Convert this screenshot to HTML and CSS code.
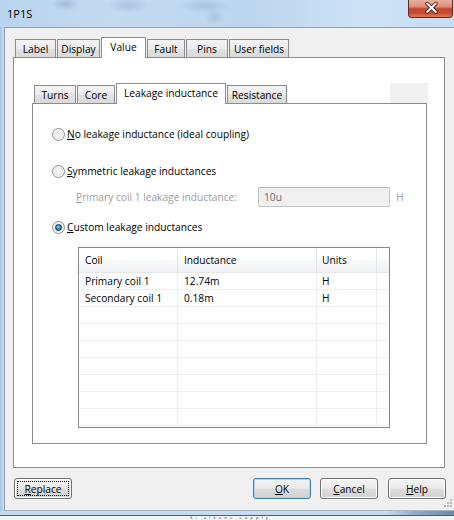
FILE: index.html
```html
<!DOCTYPE html>
<html>
<head>
<meta charset="utf-8">
<link rel="stylesheet" href="styles.css">
</head>
<body>
<div class="screen">
  <div class="titlebar">
    <span class="title">1P1S</span>
    <div class="close">
      <svg width="45" height="18" viewBox="0 0 45 18">
        <path d="M19.5 4.5L28.5 13M28.5 4.5L19.5 13" stroke="#3b1a14" stroke-width="3.8" stroke-linecap="round"/>
        <path d="M19.5 4.5L28.5 13M28.5 4.5L19.5 13" stroke="#ffffff" stroke-width="2.1" stroke-linecap="round"/>
      </svg>
    </div>
  </div>
  <div class="frame-row">
    <div class="frame-left"></div>
    <div class="client">
      <div class="tabs outer-tabs">
        <div class="tab w-label">Label</div>
        <div class="tab w-display">Display</div>
        <div class="tab tab-active w-value">Value</div>
        <div class="tab w-fault">Fault</div>
        <div class="tab w-pins">Pins</div>
        <div class="tab w-user">User fields</div>
      </div>
      <div class="panel outer-panel">
        <div class="tabs inner-tabs">
          <div class="tab w-turns">Turns</div>
          <div class="tab w-core">Core</div>
          <div class="tab tab-active w-leak">Leakage inductance</div>
          <div class="tab w-res">Resistance</div>
          <div class="tab-filler"></div>
        </div>
        <div class="panel inner-panel">
          <div class="opt opt-first">
            <span class="radio"></span>
            <span class="opt-label"><u>N</u>o leakage inductance (ideal coupling)</span>
          </div>
          <div class="opt opt-second">
            <span class="radio"></span>
            <span class="opt-label"><u>S</u>ymmetric leakage inductances</span>
          </div>
          <div class="field-row">
            <span class="field-label"><u>P</u>rimary coil 1 leakage inductance:</span>
            <span class="textbox">10u</span>
            <span class="unit">H</span>
          </div>
          <div class="opt opt-third">
            <span class="radio radio-on"></span>
            <span class="opt-label"><u>C</u>ustom leakage inductances</span>
          </div>
          <div class="grid">
            <div class="grid-head">
              <div class="hc c1">Coil</div>
              <div class="hc c2">Inductance</div>
              <div class="hc c3">Units</div>
              <div class="hc c4"></div>
            </div>
            <div class="grid-row"><div class="gc c1">Primary coil 1</div><div class="gc c2">12.74m</div><div class="gc c3">H</div><div class="gc c4"></div></div>
            <div class="grid-row"><div class="gc c1">Secondary coil 1</div><div class="gc c2">0.18m</div><div class="gc c3">H</div><div class="gc c4"></div></div>
            <div class="grid-row"><div class="gc c1"></div><div class="gc c2"></div><div class="gc c3"></div><div class="gc c4"></div></div>
            <div class="grid-row"><div class="gc c1"></div><div class="gc c2"></div><div class="gc c3"></div><div class="gc c4"></div></div>
            <div class="grid-row"><div class="gc c1"></div><div class="gc c2"></div><div class="gc c3"></div><div class="gc c4"></div></div>
            <div class="grid-row"><div class="gc c1"></div><div class="gc c2"></div><div class="gc c3"></div><div class="gc c4"></div></div>
            <div class="grid-row"><div class="gc c1"></div><div class="gc c2"></div><div class="gc c3"></div><div class="gc c4"></div></div>
            <div class="grid-row"><div class="gc c1"></div><div class="gc c2"></div><div class="gc c3"></div><div class="gc c4"></div></div>
            <div class="grid-row"><div class="gc c1"></div><div class="gc c2"></div><div class="gc c3"></div><div class="gc c4"></div></div>
          </div>
        </div>
      </div>
      <div class="buttons">
        <div class="btn btn-focus"><span><u>R</u>eplace</span></div>
        <div class="btn btn-default btn-ok"><span><u>O</u>K</span></div>
        <div class="btn btn-cancel"><span><u>C</u>ancel</span></div>
        <div class="btn btn-help"><span><u>H</u>elp</span></div>
      </div>
      <svg class="grip" width="10" height="11" viewBox="0 0 10 11">
        <rect x="7" y="1" width="2" height="2" fill="#b8b8b8"/>
        <rect x="4" y="4" width="2" height="2" fill="#b8b8b8"/>
        <rect x="7" y="4" width="2" height="2" fill="#b8b8b8"/>
        <rect x="1" y="7" width="2" height="2" fill="#b8b8b8"/>
        <rect x="4" y="7" width="2" height="2" fill="#b8b8b8"/>
        <rect x="7" y="7" width="2" height="2" fill="#b8b8b8"/>
      </svg>
    </div>
  </div>
  <div class="frame-bottom"></div>
  <div class="backdrop"><span class="backdrop-text">S: alkane supply</span></div>
</div>
</body>
</html>
```

FILE: styles.css
```css
html, body {
  margin: 0;
  padding: 0;
}

body {
  width: 454px;
  height: 520px;
  overflow: hidden;
  font-family: "Open Sans", "Noto Sans", sans-serif;
  font-size: 10.2px;
  color: #000;
  background: #c4dbf1;
}

.screen {
  width: 454px;
  height: 520px;
  display: flex;
  flex-direction: column;
  overflow: hidden;
}

/* ---------- title bar ---------- */
.titlebar {
  flex: none;
  height: 27px;
  display: flex;
  align-items: flex-start;
  background:
    radial-gradient(ellipse 14px 7px at 66px 4px, rgba(110, 140, 180, 0.35), rgba(110, 140, 180, 0)),
    radial-gradient(ellipse 22px 8px at 128px 5px, rgba(120, 150, 190, 0.32), rgba(120, 150, 190, 0)),
    radial-gradient(ellipse 28px 7px at 205px 6px, rgba(120, 150, 190, 0.3), rgba(120, 150, 190, 0)),
    radial-gradient(ellipse 10px 9px at 215px 17px, rgba(120, 150, 190, 0.28), rgba(120, 150, 190, 0)),
    linear-gradient(90deg, #b9d4ee 0%, #c3daf1 25%, #bcd6ef 55%, #cde2f5 80%, #c6ddf3 100%);
}

.title {
  margin: 6px 0 0 7px;
  font-size: 11px;
  line-height: 15px;
  color: #000;
}

.close {
  margin-left: auto;
  margin-right: 1px;
  width: 45px;
  height: 18px;
  box-sizing: border-box;
  border: 1px solid #5e2a20;
  border-top: none;
  border-radius: 0 0 4px 4px;
  background: linear-gradient(#eab0a3 0%, #dc8c79 40%, #c5462c 52%, #c24a2f 75%, #de7b54 100%);
  display: flex;
  align-items: flex-start;
  justify-content: center;
  overflow: hidden;
}

.close svg {
  display: block;
  margin-left: -1px;
  margin-top: -1px;
}

/* ---------- frame ---------- */
.frame-row {
  flex: none;
  height: 484px;
  display: flex;
}

.frame-left {
  flex: none;
  width: 4px;
  background: linear-gradient(90deg, #a8c4e2, #c8dcf1);
}

.client {
  position: relative;
  flex: 1;
  background: #f0f0f0;
  border-top: 1px solid #8fa1b4;
  border-left: 1px solid #8fa1b4;
  border-bottom: 1px solid #a9b6c4;
  display: flex;
  flex-direction: column;
}

.frame-bottom {
  flex: none;
  height: 4px;
  background: linear-gradient(90deg, #c5dbf1 0%, #c5dbf1 85%, #8ea9c4 92%, #6f8aa6 100%);
  border-bottom: 1px solid #4e5d6c;
}

.backdrop {
  flex: 1;
  background: #f4f4f4;
  overflow: hidden;
  display: flex;
  align-items: center;
}

.backdrop-text {
  display: block;
  margin-left: 190px;
  font-size: 4px;
  line-height: 4px;
  letter-spacing: 3.2px;
  color: #333;
}

/* ---------- tabs ---------- */
.tabs {
  display: flex;
  align-items: flex-end;
  gap: 1px;
  height: 20px;
  position: relative;
  z-index: 1;
}

.outer-tabs {
  margin: 9px 0 0 8px;
}

.inner-tabs {
  margin: 25px 0 0 18px;
  width: 396px;
}

.tab {
  flex: none;
  height: 18px;
  box-sizing: border-box;
  border: 1px solid #898c95;
  border-bottom: none;
  background: linear-gradient(#f3f3f3 0%, #ececec 50%, #e1e1e1 55%, #dadada 100%);
  display: flex;
  align-items: center;
  justify-content: center;
  white-space: nowrap;
  line-height: 14px;
}

.tab:first-child {
  margin-left: 2px;
}

.tab-active {
  height: 21px;
  margin-bottom: -1px;
  background: #ffffff;
  padding-bottom: 2px;
}

.tab-filler {
  flex: none;
  margin-left: auto;
  width: 38px;
  height: 20px;
  align-self: flex-start;
  background: #f0f0f0;
}

.w-label { width: 41px; }
.w-display { width: 43px; }
.w-value { width: 45px; }
.w-fault { width: 38px; }
.w-pins { width: 42px; }
.w-user { width: 60px; }

.w-turns { width: 42px; }
.w-core { width: 38px; }
.w-leak { width: 110px; }
.w-res { width: 60px; }

/* ---------- panels ---------- */
.panel {
  box-sizing: border-box;
  border: 1px solid #898c95;
  background: #ffffff;
}

.outer-panel {
  margin-left: 8px;
  width: 432px;
  height: 411px;
  display: flex;
  flex-direction: column;
}

.inner-panel {
  margin-left: 18px;
  width: 395px;
  height: 341px;
  display: flex;
  flex-direction: column;
}

/* ---------- options ---------- */
.opt {
  display: flex;
  align-items: center;
  height: 16px;
  margin-left: 19px;
}

.opt-first { margin-top: 22px; }
.opt-second { margin-top: 21px; }
.opt-third { margin-top: 12px; }

.radio {
  flex: none;
  position: relative;
  width: 13px;
  height: 13px;
  box-sizing: border-box;
  border-radius: 50%;
  border: 1px solid #8e8f8f;
  background: radial-gradient(circle at 50% 45%, #f6f6f6 0%, #ececec 45%, #d3d3d3 100%);
  box-shadow: inset 0 0 0 1px #fbfbfb;
}

.radio-on::after {
  content: "";
  position: absolute;
  left: 2px;
  top: 2px;
  width: 7px;
  height: 7px;
  box-sizing: border-box;
  border-radius: 50%;
  border: 1px solid #12385e;
  background: radial-gradient(circle at 45% 40%, #8fe0ff 0%, #2a96d8 45%, #0d4b86 100%);
}

.opt-label {
  margin-left: 2px;
  line-height: 16px;
  white-space: nowrap;
}

.field-row {
  display: flex;
  align-items: center;
  height: 20px;
  margin-top: 8px;
  margin-left: 43px;
  color: #9d9d9d;
}

.field-label {
  width: 182px;
  white-space: nowrap;
}

.textbox {
  width: 132px;
  height: 20px;
  box-sizing: border-box;
  border: 1px solid #c2c4c7;
  border-top-color: #b0b3b7;
  border-radius: 2px;
  background: #f0f0f0;
  color: #6d6d6d;
  padding-left: 5px;
  display: flex;
  align-items: center;
}

.unit {
  margin-left: 6px;
}

/* ---------- grid ---------- */
.grid {
  margin: 12px 0 0 45px;
  width: 312px;
  box-sizing: border-box;
  border: 1px solid #828790;
  background: #ffffff;
  padding-bottom: 1px;
}

.grid-head,
.grid-row {
  display: grid;
  grid-template-columns: 99px 139px 60px 1fr;
}

.grid-head {
  height: 25px;
  box-sizing: border-box;
  border-bottom: 1px solid #e6e7e9;
  background: linear-gradient(#ffffff 0%, #ffffff 45%, #f7f8f9 55%, #f2f3f5 100%);
}

.grid-row {
  height: 17px;
  box-sizing: border-box;
  border-bottom: 1px solid #efefef;
}

.hc,
.gc {
  box-sizing: border-box;
  display: flex;
  align-items: center;
  padding-left: 6px;
  white-space: nowrap;
  overflow: hidden;
}

.hc {
  border-right: 1px solid #e4e5e8;
}

.gc {
  border-right: 1px solid #efefef;
}

.hc.c3,
.gc.c3 {
  padding-left: 5px;
}

.hc.c4,
.gc.c4 {
  border-right: none;
}

/* ---------- buttons ---------- */
.buttons {
  display: flex;
  margin: 10px 0 0 9px;
  width: 432px;
}

.btn {
  flex: none;
  width: 58px;
  height: 21px;
  box-sizing: border-box;
  border: 1px solid #707070;
  border-radius: 3px;
  background: linear-gradient(#f3f3f3 0%, #ebebeb 48%, #dddddd 52%, #d1d1d1 100%);
  box-shadow: inset 0 0 0 1px #fbfbfb;
  display: flex;
  align-items: center;
  justify-content: center;
  line-height: 14px;
}

.btn-focus {
  outline: 1px dotted #000;
  outline-offset: -4px;
}

.btn-default {
  border-color: #3c7fb1;
  box-shadow: inset 0 0 0 1px #a6dcf7;
}

.btn-ok { margin-left: auto; }
.btn-cancel { margin-left: 9px; }
.btn-help { margin-left: 10px; }

.grip {
  position: absolute;
  right: 1px;
  bottom: 1px;
}
```
